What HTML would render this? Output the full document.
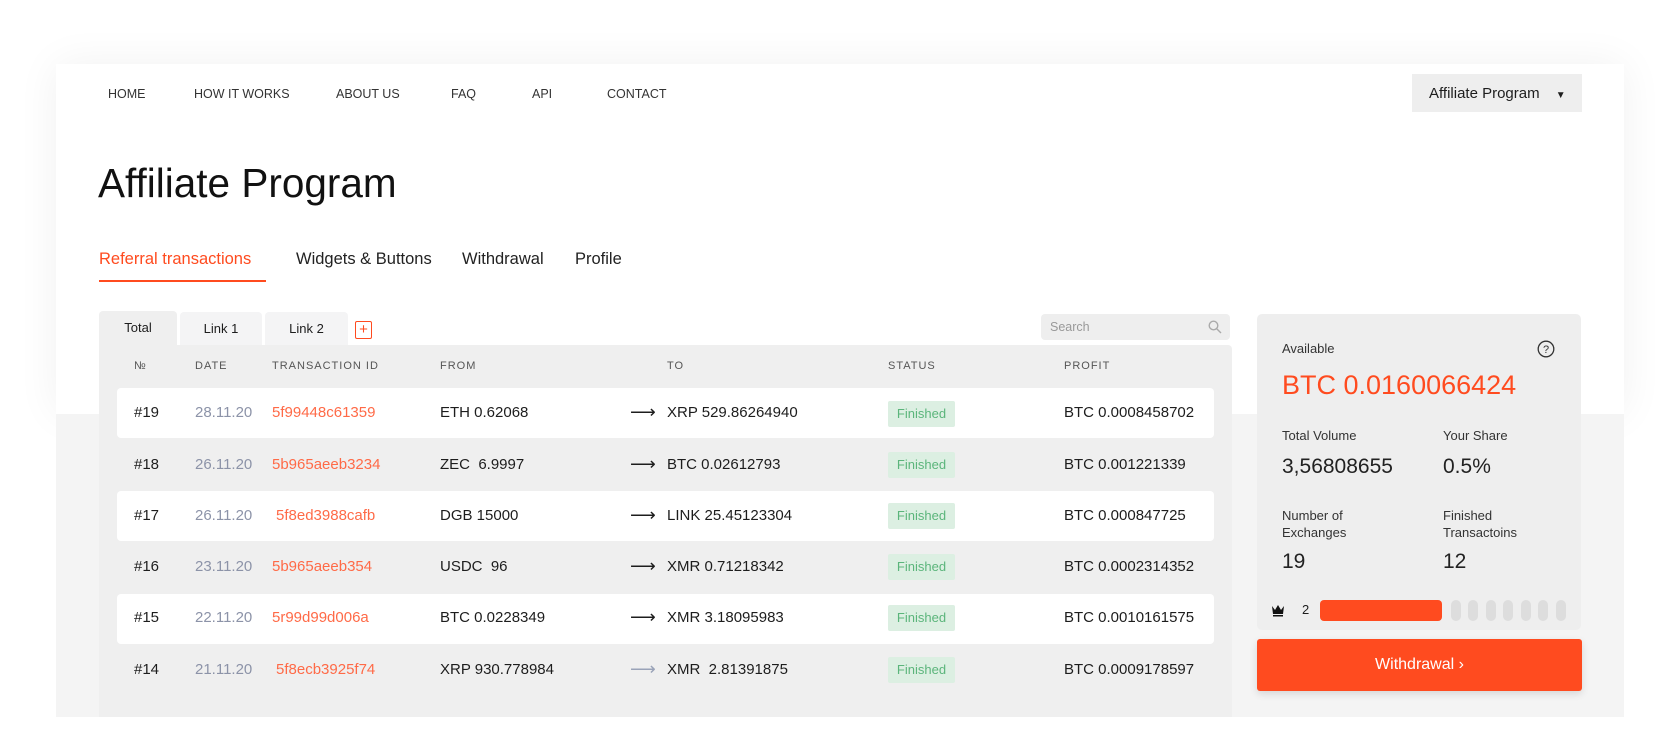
<!DOCTYPE html>
<html><head><meta charset="utf-8"><style>
*{margin:0;padding:0;box-sizing:border-box}
body{width:1680px;height:729px;background:#fff;font-family:"Liberation Sans",sans-serif;color:#1d1d1d;position:relative;overflow:hidden}
.a{position:absolute;white-space:nowrap}
.top{left:56px;top:64px;width:1568px;height:350px;background:#fff;box-shadow:0 0 40px rgba(0,0,0,.06)}
.bot{left:56px;top:414px;width:1568px;height:303px;background:#f4f4f4}
.nav{font-size:12.5px;color:#333;top:87px}
.tab{font-size:16.5px;top:250px;color:#222}
.sub{top:312px;height:33px;font-size:13px;text-align:center;line-height:33px;background:#f4f4f5;border-radius:4px 4px 0 0}
.th{font-size:11px;letter-spacing:1px;color:#555;top:360px}
.row{left:117px;width:1097px;height:50px;border-radius:4px}
.c{font-size:15px;position:absolute;white-space:nowrap}
.badge{position:absolute;left:888px;width:67px;height:26px;background:#dcefe2;color:#5bb57b;font-size:13px;line-height:26px;text-align:center;border-radius:2px}
.lbl{font-size:13px;color:#333}
.val{font-size:21px;color:#222}
.pill{position:absolute;top:600px;width:10px;height:21px;border-radius:5px;background:#ddd}
</style></head><body>
<div class="a top"></div><div class="a bot"></div>
<div class="a nav" style="left:108px">HOME</div>
<div class="a nav" style="left:194px">HOW IT WORKS</div>
<div class="a nav" style="left:336px">ABOUT US</div>
<div class="a nav" style="left:451px">FAQ</div>
<div class="a nav" style="left:532px">API</div>
<div class="a nav" style="left:607px">CONTACT</div>
<div class="a" style="left:1412px;top:74px;width:170px;height:38px;background:#eee;font-size:15px;line-height:40px;padding-left:17px">Affiliate Program <span style="font-size:10px;margin-left:12px">▼</span></div>
<div class="a" style="left:98px;top:160px;font-size:40.5px;color:#111">Affiliate Program</div>
<div class="a tab" style="left:99px;color:#ff4b1f">Referral transactions</div>
<div class="a" style="left:99px;top:280px;width:167px;height:2px;background:#ff4b1f"></div>
<div class="a tab" style="left:296px">Widgets &amp; Buttons</div>
<div class="a tab" style="left:462px">Withdrawal</div>
<div class="a tab" style="left:575px">Profile</div>
<div class="a" style="left:99px;top:345px;width:1133px;height:372px;background:#efefef;border-radius:0 4px 0 0"></div>
<div class="a sub" style="left:99px;width:78px;background:#efefef;top:311px;height:34px;line-height:34px">Total</div>
<div class="a sub" style="left:180px;width:82px">Link 1</div>
<div class="a sub" style="left:265px;width:83px">Link 2</div>
<div class="a" style="left:355px;top:321px;width:17px;height:18px;border:1.5px solid #ff4b1f;border-radius:2px;color:#ff4b1f;font-size:15px;line-height:15px;text-align:center">+</div>
<div class="a" style="left:1041px;top:314px;width:189px;height:26px;background:#eee;border-radius:4px;font-size:12.5px;color:#999;line-height:26px;padding-left:9px">Search
<svg style="position:absolute;right:8px;top:6px" width="14" height="14" viewBox="0 0 14 14"><circle cx="5.5" cy="5.5" r="4.3" fill="none" stroke="#aaa" stroke-width="1.4"/><path d="M8.7 8.7L13 13" stroke="#aaa" stroke-width="1.4"/></svg></div>
<div class="a th" style="left:134px">№</div>
<div class="a th" style="left:195px">DATE</div>
<div class="a th" style="left:272px">TRANSACTION ID</div>
<div class="a th" style="left:440px">FROM</div>
<div class="a th" style="left:667px">TO</div>
<div class="a th" style="left:888px">STATUS</div>
<div class="a th" style="left:1064px">PROFIT</div>

<div class="a row" style="top:388px;background:#fff"></div>
<div class="a row" style="top:491px;background:#fff"></div>
<div class="a row" style="top:594px;background:#fff"></div>

<div class="c" style="left:134px;top:404px">#19</div><div class="c" style="left:195px;top:404px;color:#8c93a8">28.11.20</div><div class="c" style="left:272px;top:404px;color:#ff6a47">5f99448c61359</div><div class="c" style="left:440px;top:404px">ETH 0.62068</div><div class="c" style="left:630px;top:402px;font-size:18px">⟶</div><div class="c" style="left:667px;top:404px">XRP 529.86264940</div><div class="badge" style="top:401px">Finished</div><div class="c" style="left:1064px;top:404px">BTC 0.0008458702</div>
<div class="c" style="left:134px;top:456px">#18</div><div class="c" style="left:195px;top:456px;color:#8c93a8">26.11.20</div><div class="c" style="left:272px;top:456px;color:#ff6a47">5b965aeeb3234</div><div class="c" style="left:440px;top:456px">ZEC&nbsp; 6.9997</div><div class="c" style="left:630px;top:454px;font-size:18px">⟶</div><div class="c" style="left:667px;top:456px">BTC 0.02612793</div><div class="badge" style="top:452px">Finished</div><div class="c" style="left:1064px;top:456px">BTC 0.001221339</div>
<div class="c" style="left:134px;top:507px">#17</div><div class="c" style="left:195px;top:507px;color:#8c93a8">26.11.20</div><div class="c" style="left:276px;top:507px;color:#ff6a47">5f8ed3988cafb</div><div class="c" style="left:440px;top:507px">DGB 15000</div><div class="c" style="left:630px;top:505px;font-size:18px">⟶</div><div class="c" style="left:667px;top:507px">LINK 25.45123304</div><div class="badge" style="top:503px">Finished</div><div class="c" style="left:1064px;top:507px">BTC 0.000847725</div>
<div class="c" style="left:134px;top:558px">#16</div><div class="c" style="left:195px;top:558px;color:#8c93a8">23.11.20</div><div class="c" style="left:272px;top:558px;color:#ff6a47">5b965aeeb354</div><div class="c" style="left:440px;top:558px">USDC&nbsp; 96</div><div class="c" style="left:630px;top:556px;font-size:18px">⟶</div><div class="c" style="left:667px;top:558px">XMR 0.71218342</div><div class="badge" style="top:554px">Finished</div><div class="c" style="left:1064px;top:558px">BTC 0.0002314352</div>
<div class="c" style="left:134px;top:609px">#15</div><div class="c" style="left:195px;top:609px;color:#8c93a8">22.11.20</div><div class="c" style="left:272px;top:609px;color:#ff6a47">5r99d99d006a</div><div class="c" style="left:440px;top:609px">BTC 0.0228349</div><div class="c" style="left:630px;top:607px;font-size:18px">⟶</div><div class="c" style="left:667px;top:609px">XMR 3.18095983</div><div class="badge" style="top:605px">Finished</div><div class="c" style="left:1064px;top:609px">BTC 0.0010161575</div>
<div class="c" style="left:134px;top:661px">#14</div><div class="c" style="left:195px;top:661px;color:#8c93a8">21.11.20</div><div class="c" style="left:276px;top:661px;color:#ff6a47">5f8ecb3925f74</div><div class="c" style="left:440px;top:661px">XRP 930.778984</div><div class="c" style="left:630px;top:659px;font-size:18px;color:#9aa3b8">⟶</div><div class="c" style="left:667px;top:661px">XMR&nbsp; 2.81391875</div><div class="badge" style="top:657px">Finished</div><div class="c" style="left:1064px;top:661px">BTC 0.0009178597</div>

<div class="a" style="left:1257px;top:314px;width:324px;height:316px;background:#eee;border-radius:5px"></div>
<div class="a lbl" style="left:1282px;top:341px">Available</div>
<svg class="a" style="left:1537px;top:340px" width="18" height="18" viewBox="0 0 18 18"><circle cx="9" cy="9" r="7.8" fill="none" stroke="#333" stroke-width="1.3"/><text x="9" y="13" font-size="11" text-anchor="middle" fill="#333" font-family="Liberation Sans">?</text></svg>
<div class="a" style="left:1282px;top:370px;font-size:27px;color:#ff4b1f">BTC 0.0160066424</div>
<div class="a lbl" style="left:1282px;top:428px">Total Volume</div>
<div class="a lbl" style="left:1443px;top:428px">Your Share</div>
<div class="a val" style="left:1282px;top:455px">3,56808655</div>
<div class="a val" style="left:1443px;top:455px">0.5%</div>
<div class="a lbl" style="left:1282px;top:507px;line-height:17px">Number of<br>Exchanges</div>
<div class="a lbl" style="left:1443px;top:507px;line-height:17px">Finished<br>Transactoins</div>
<div class="a val" style="left:1282px;top:550px">19</div>
<div class="a val" style="left:1443px;top:550px">12</div>
<svg class="a" style="left:1271px;top:603px" width="14" height="14" viewBox="0 0 14 14"><path d="M1 3L4 7L7 2L10 7L13 3L12 11H2Z M2 12H12V13.5H2Z" fill="#111"/></svg>
<div class="a" style="left:1302px;top:602px;font-size:13px">2</div>
<div class="a" style="left:1320px;top:600px;width:122px;height:21px;background:#ff4b1f;border-radius:4px"></div>
<div class="pill" style="left:1451px"></div><div class="pill" style="left:1468px"></div><div class="pill" style="left:1486px"></div><div class="pill" style="left:1503px"></div><div class="pill" style="left:1521px"></div><div class="pill" style="left:1538px"></div><div class="pill" style="left:1556px"></div>
<div class="a" style="left:1257px;top:639px;width:325px;height:52px;background:#ff4b1f;border-radius:3px;color:#fff;font-size:16px;text-align:center;line-height:52px;box-shadow:0 3px 8px rgba(0,0,0,.12)">Withdrawal ›</div>
</body></html>
